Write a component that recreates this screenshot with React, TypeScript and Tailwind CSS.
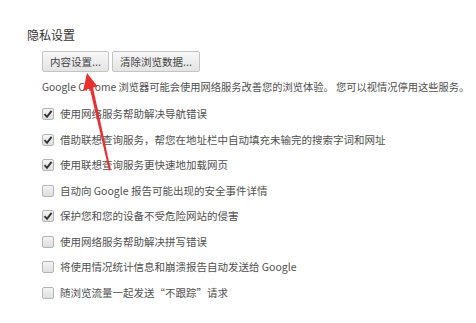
import React from 'react';

const items: { label: string; checked: boolean }[] = [
  { label: '使用网络服务帮助解决导航错误', checked: true },
  { label: '借助联想查询服务，帮您在地址栏中自动填充未输完的搜索字词和网址', checked: true },
  { label: '使用联想查询服务更快速地加载网页', checked: true },
  { label: '自动向 Google 报告可能出现的安全事件详情', checked: false },
  { label: '保护您和您的设备不受危险网站的侵害', checked: true },
  { label: '使用网络服务帮助解决拼写错误', checked: false },
  { label: '将使用情况统计信息和崩溃报告自动发送给 Google', checked: false },
  { label: '随浏览流量一起发送“不跟踪”请求', checked: false },
];

const CheckBox: React.FC<{ checked: boolean }> = ({ checked }) => (
  <span className="w-[12px] h-[12px] shrink-0 rounded-[2px] border border-[#b5b5b5] bg-gradient-to-b from-[#f4f4f4] to-[#dedede] flex items-center justify-center">
    {checked && (
      <svg width="10" height="10" viewBox="0 0 10 10">
        <path d="M1.5 5.2 L4 7.8 L8.6 1.8" fill="none" stroke="#333" strokeWidth="1.9" />
      </svg>
    )}
  </span>
);

const Btn: React.FC<{ children: React.ReactNode; w: string }> = ({ children, w }) => (
  <button
    className={`${w} h-[21px] rounded-[2px] border border-[#c3c3c3] bg-gradient-to-b from-[#f7f7f7] to-[#e4e4e4] text-[10.5px] text-[#444] flex items-center justify-center`}
  >
    {children}
  </button>
);

const App: React.FC = () => {
  return (
    <div
      className="relative w-[476px] h-[323px] bg-white overflow-hidden pl-[27px] pt-[27px] text-[#505050]"
      style={{ fontFamily: '"Noto Sans CJK SC", "Noto Sans", sans-serif' }}
    >
      {/* 隐私设置 */}
      <h2 className="text-[12px] leading-[16px] text-[#333]">隐私设置</h2>

      <div className="ml-[15px] mt-[8px] flex gap-[3px]">
        <Btn w="w-[67px]">内容设置...</Btn>
        <Btn w="w-[88px]">清除浏览数据...</Btn>
      </div>

      <p className="ml-[15px] mt-[8px] text-[10.25px] leading-[14px] whitespace-nowrap">
        Google Chrome 浏览器可能会使用网络服务改善您的浏览体验。 您可以视情况停用这些服务。
      </p>

      <ul className="ml-[15px] mt-[13px] flex flex-col gap-[11.5px]">
        {items.map((it) => (
          <li key={it.label} className="flex items-center gap-[6px] h-[14px] text-[10.5px] whitespace-nowrap">
            <CheckBox checked={it.checked} />
            <span>{it.label}</span>
          </li>
        ))}
      </ul>

      {/* 红色箭头标注 */}
      <svg className="absolute left-0 top-0 pointer-events-none" width="476" height="323">
        <polygon
          points="87,73 97.5,86.5 93,87.5 110.8,170 109,170.5 89.8,88.5 83,91"
          fill="#e8312f"
        />
      </svg>
    </div>
  );
};

export default App;
